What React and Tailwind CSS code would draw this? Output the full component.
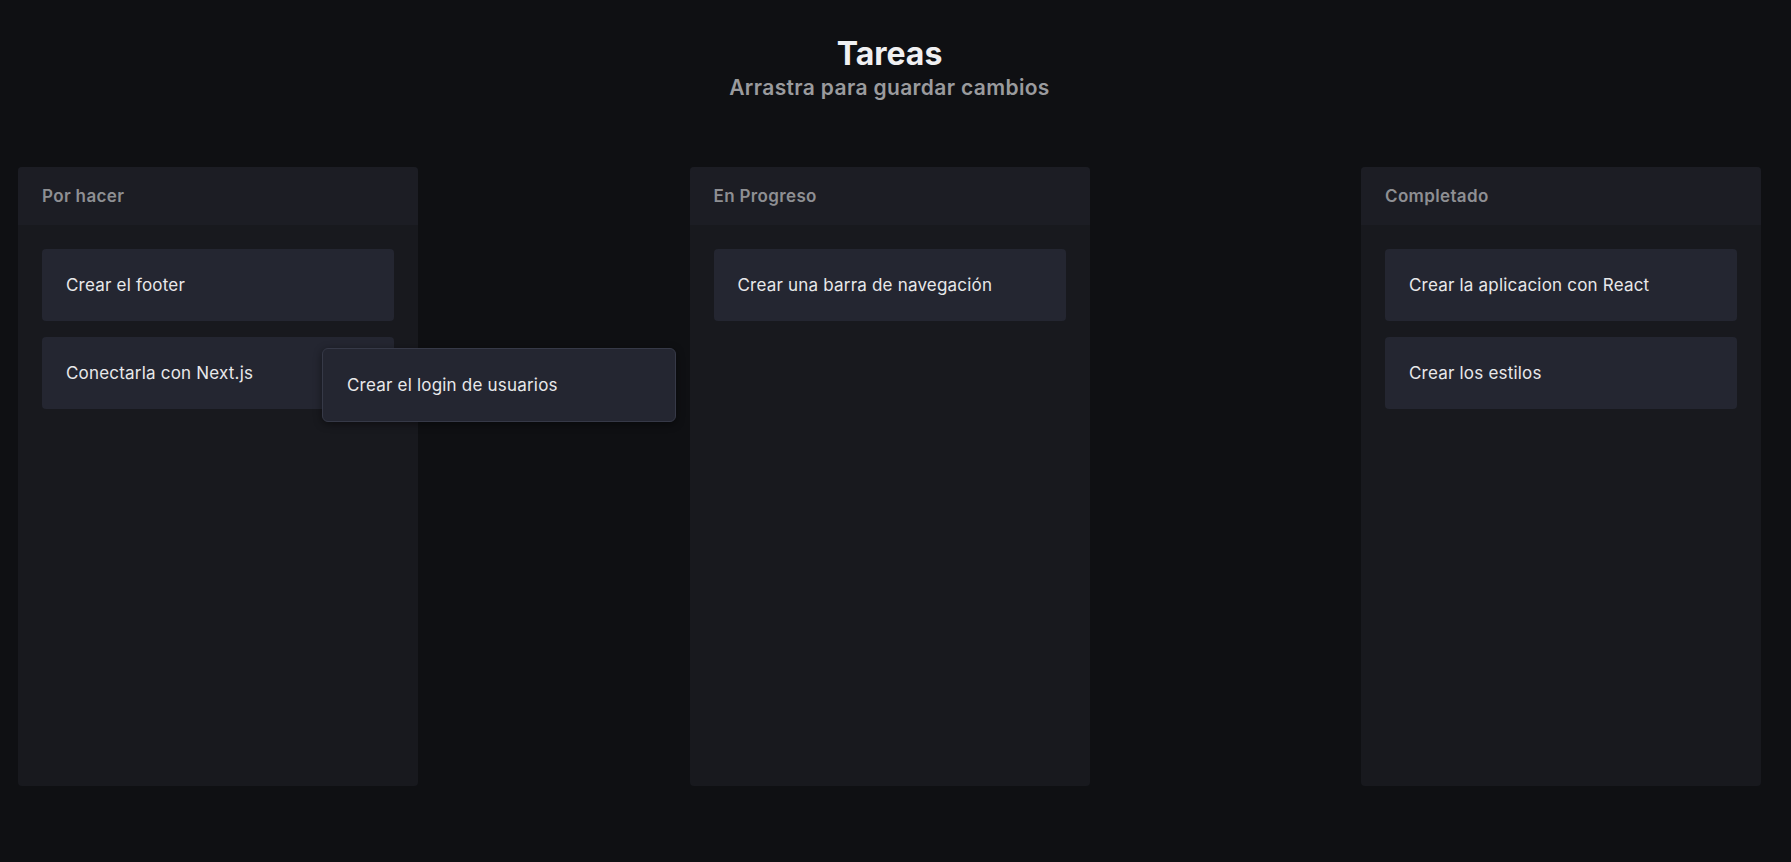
const columns = [
  { id: "todo", title: "Por hacer", tasks: ["Crear el footer", "Conectarla con Next.js"] },
  { id: "progress", title: "En Progreso", tasks: ["Crear una barra de navegación"] },
  { id: "done", title: "Completado", tasks: ["Crear la aplicacion con React", "Crear los estilos"] },
];

function TaskCard({ text }) {
  return (
    <div className="flex h-[72px] items-center rounded bg-[#242631] px-6 pt-[2px] text-[17px] tracking-[0.2px] text-[#e8e8ea]">
      {text}
    </div>
  );
}

function Column({ title, tasks }) {
  return (
    <section className="flex h-[619px] w-[400px] flex-col rounded bg-[#18191e]">
      <div className="flex h-[58px] items-center rounded-t bg-[#1c1d24] px-6 pt-[1px] text-[17px] font-semibold tracking-[0.35px] text-[#8e8f93]">
        {title}
      </div>
      <div className="flex flex-col gap-4 p-6">
        {tasks.map((t) => (
          <TaskCard key={t} text={t} />
        ))}
      </div>
    </section>
  );
}

export default function App() {
  return (
    <div className="min-h-screen bg-[#0f1013] pl-[18px] pr-[30px] font-['Inter',sans-serif]">
      <header className="pt-[36px] text-center">
        <h1 className="text-[32px] font-bold leading-9 text-[#f0f0f2]">Tareas</h1>
        <p className="mt-[2px] text-[21px] font-semibold leading-7 tracking-[0.35px] text-[#9a9b9e]">
          Arrastra para guardar cambios
        </p>
      </header>

      <main className="relative mt-[65px] flex justify-between">
        {columns.map((col) => (
          <Column key={col.id} title={col.title} tasks={col.tasks} />
        ))}

        {/* card being dragged */}
        <div className="absolute left-[304px] top-[181px] flex h-[74px] w-[354px] items-center rounded-md border border-[#363947] bg-[#242631] px-6 pt-[2px] text-[17px] tracking-[0.2px] text-[#e8e8ea] shadow-[0_2px_8px_rgba(0,0,0,0.45)]">
          Crear el login de usuarios
        </div>
      </main>
    </div>
  );
}
